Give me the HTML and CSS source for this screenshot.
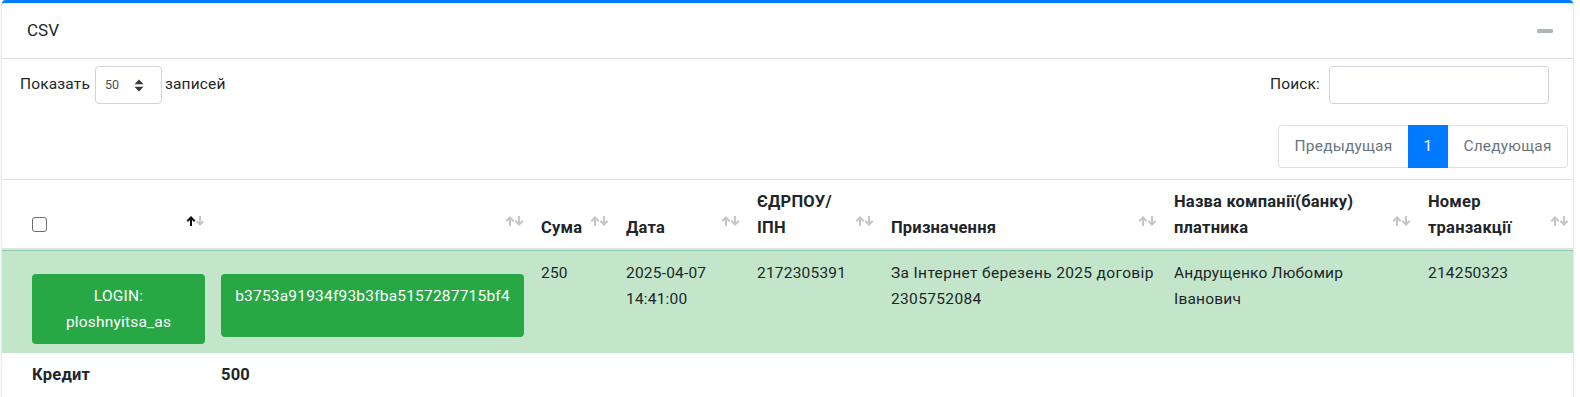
FILE: index.html
```html
<!DOCTYPE html>
<html lang="uk">
<head>
<meta charset="utf-8">
<title>CSV</title>
<link rel="stylesheet" href="styles.css">
</head>
<body>
<div class="page">
  <div class="card">
    <div class="card-header">
      <h3 class="card-title">CSV</h3>
      <button class="tool" type="button" aria-label="collapse"><span class="minus"></span></button>
    </div>
    <div class="card-body">
      <div class="top-row">
        <label class="len">Показать
          <span class="select"><span class="sel-val">50</span>
            <svg class="sel-arrow" width="10" height="13" viewBox="0 0 10 13"><path d="M0.5 5.3 L5 0.6 L9.5 5.3 Z M0.5 7.7 L5 12.4 L9.5 7.7 Z" fill="#343a40"/></svg>
          </span>
          записей</label>
        <label class="search">Поиск: <span class="input"></span></label>
      </div>
      <div class="pag-row">
        <ul class="pagination">
          <li class="page-item disabled"><span class="page-link prev">Предыдущая</span></li>
          <li class="page-item active"><span class="page-link num">1</span></li>
          <li class="page-item disabled"><span class="page-link next">Следующая</span></li>
        </ul>
      </div>
      <table class="tbl">
        <colgroup>
          <col class="c1"><col class="c2"><col class="c3"><col class="c4"><col class="c5"><col class="c6"><col class="c7"><col class="c8">
        </colgroup>
        <thead>
          <tr>
            <th class="first"><div class="th"><input type="checkbox" class="chk"><svg class="sort" width="19" height="10" viewBox="0 0 19 10"><path d="M5 10V1.5 M1.3 5.2 L5 1.4 L8.7 5.2" stroke="#111" stroke-width="2" fill="none"/><path d="M14 0V8.5 M10.8 5.2 L14 8.5 L17.2 5.2" stroke="#c6c6c6" stroke-width="2" fill="none"/></svg></div></th>
            <th class="second"><div class="th"><span></span><svg class="sort" width="19" height="10" viewBox="0 0 19 10"><path d="M5 10V1.5 M1.3 5.2 L5 1.4 L8.7 5.2" stroke="#c6c6c6" stroke-width="2" fill="none"/><path d="M14 0V8.5 M10.3 4.8 L14 8.6 L17.7 4.8" stroke="#c6c6c6" stroke-width="2" fill="none"/></svg></div></th>
            <th><div class="th"><span>Сума</span><svg class="sort" width="19" height="10" viewBox="0 0 19 10"><path d="M5 10V1.5 M1.3 5.2 L5 1.4 L8.7 5.2" stroke="#c6c6c6" stroke-width="2" fill="none"/><path d="M14 0V8.5 M10.3 4.8 L14 8.6 L17.7 4.8" stroke="#c6c6c6" stroke-width="2" fill="none"/></svg></div></th>
            <th><div class="th"><span>Дата</span><svg class="sort" width="19" height="10" viewBox="0 0 19 10"><path d="M5 10V1.5 M1.3 5.2 L5 1.4 L8.7 5.2" stroke="#c6c6c6" stroke-width="2" fill="none"/><path d="M14 0V8.5 M10.3 4.8 L14 8.6 L17.7 4.8" stroke="#c6c6c6" stroke-width="2" fill="none"/></svg></div></th>
            <th><div class="th"><span>ЄДРПОУ/<br>ІПН</span><svg class="sort" width="19" height="10" viewBox="0 0 19 10"><path d="M5 10V1.5 M1.3 5.2 L5 1.4 L8.7 5.2" stroke="#c6c6c6" stroke-width="2" fill="none"/><path d="M14 0V8.5 M10.3 4.8 L14 8.6 L17.7 4.8" stroke="#c6c6c6" stroke-width="2" fill="none"/></svg></div></th>
            <th><div class="th"><span>Призначення</span><svg class="sort" width="19" height="10" viewBox="0 0 19 10"><path d="M5 10V1.5 M1.3 5.2 L5 1.4 L8.7 5.2" stroke="#c6c6c6" stroke-width="2" fill="none"/><path d="M14 0V8.5 M10.3 4.8 L14 8.6 L17.7 4.8" stroke="#c6c6c6" stroke-width="2" fill="none"/></svg></div></th>
            <th><div class="th"><span>Назва компанії(банку)<br>платника</span><svg class="sort" width="19" height="10" viewBox="0 0 19 10"><path d="M5 10V1.5 M1.3 5.2 L5 1.4 L8.7 5.2" stroke="#c6c6c6" stroke-width="2" fill="none"/><path d="M14 0V8.5 M10.3 4.8 L14 8.6 L17.7 4.8" stroke="#c6c6c6" stroke-width="2" fill="none"/></svg></div></th>
            <th><div class="th"><span>Номер<br>транзакції</span><svg class="sort" width="19" height="10" viewBox="0 0 19 10"><path d="M5 10V1.5 M1.3 5.2 L5 1.4 L8.7 5.2" stroke="#c6c6c6" stroke-width="2" fill="none"/><path d="M14 0V8.5 M10.3 4.8 L14 8.6 L17.7 4.8" stroke="#c6c6c6" stroke-width="2" fill="none"/></svg></div></th>
          </tr>
        </thead>
        <tbody>
          <tr class="row-success">
            <td class="btn-cell first"><span class="btn">LOGIN:<br>ploshnyitsa_as</span></td>
            <td class="btn-cell second"><span class="btn hash">b3753a91934f93b3fba5157287715bf4</span></td>
            <td>250</td>
            <td>2025-04-07<br>14:41:00</td>
            <td>2172305391</td>
            <td class="wide">За Інтернет березень 2025 договір<br>2305752084</td>
            <td>Андрущенко Любомир<br>Іванович</td>
            <td>214250323</td>
          </tr>
          <tr class="row-foot">
            <td class="first">Кредит</td>
            <td class="second">500</td>
            <td></td><td></td><td></td><td></td><td></td><td></td>
          </tr>
        </tbody>
      </table>
    </div>
  </div>
</div>
</body>
</html>
```

FILE: styles.css
```css
* { box-sizing: border-box; }
html, body { margin: 0; padding: 0; background: #fff; }
body {
  font-family: Roboto, "Noto Sans", "DejaVu Sans", sans-serif;
  font-size: 15.5px;
  line-height: 25.5px;
  color: #212529;
}
.page { padding: 0 7px 0 2px; }
.card {
  background: #fff;
  border-top: 3px solid #007bff;
  border-radius: 4px 4px 0 0;
  box-shadow: 0 0 1px rgba(0,0,0,.125), 0 1px 3px rgba(0,0,0,.2);
}
.card-header {
  height: 56px;
  display: flex;
  align-items: center;
  justify-content: space-between;
  padding: 0 20px 0 25px;
  border-bottom: 1px solid rgba(0,0,0,.125);
}
.card-title {
  margin: 0;
  font-size: 17px;
  font-weight: 400;
  line-height: 1.2;
  color: #212529;
}
.tool {
  border: 0;
  background: transparent;
  padding: 0;
  width: 16px;
  height: 16px;
  display: flex;
  align-items: center;
}
.minus {
  display: block;
  width: 16px;
  height: 4px;
  border-radius: 1px;
  background: #adb5bd;
}
.top-row {
  display: flex;
  justify-content: space-between;
  align-items: center;
  padding: 7px 24px 0 18px;
  height: 45px;
  letter-spacing: 0.15px;
}
.len, .search {
  display: flex;
  align-items: center;
  gap: 4px;
}
.select {
  width: 67px;
  height: 38px;
  border: 1px solid #ced4da;
  border-radius: 4px;
  display: flex;
  align-items: center;
  justify-content: space-between;
  padding: 0 17px 0 9px;
  margin-right: -1px;
  margin-left: 1px;
}
.sel-val { font-size: 12.5px; color: #495057; letter-spacing: 0; }
.search { gap: 9px; }
.input {
  width: 220px;
  height: 38px;
  border: 1px solid #ced4da;
  border-radius: 4px;
}
.pag-row {
  display: flex;
  justify-content: flex-end;
  padding: 21px 5px 0 0;
  height: 75px;
}
.pagination {
  list-style: none;
  margin: 0;
  padding: 0;
  display: flex;
  height: 43px;
  letter-spacing: 0.2px;
}
.page-link {
  display: flex;
  align-items: center;
  justify-content: center;
  height: 43px;
  border: 1px solid #dee2e6;
  color: #6c757d;
  background: #fff;
}
.prev { width: 130px; border-radius: 4px 0 0 4px; border-right: 0; }
.num { width: 40px; background: #007bff; border-color: #007bff; color: #fff; }
.next { width: 120px; border-radius: 0 4px 4px 0; border-left: 0; }
.tbl {
  width: 100%;
  table-layout: fixed;
  border-collapse: separate;
  border-spacing: 0;
}
.c1 { width: 207px; }
.c2 { width: 319px; }
.c3 { width: 85px; }
.c4 { width: 131px; }
.c5 { width: 134px; }
.c6 { width: 283px; }
.c7 { width: 254px; }
.c8 { width: 158px; }
.tbl th {
  text-align: left;
  vertical-align: bottom;
  font-weight: 700;
  font-size: 16.5px;
  letter-spacing: 0.2px;
  border-top: 1px solid #dee2e6;
  border-bottom: 2px solid #dee2e6;
  padding: 9px 4px 8px 13px;
}
.th {
  display: flex;
  justify-content: space-between;
  align-items: flex-end;
}
.sort { margin-bottom: 14px; flex: none; }
.tbl th.first { padding-left: 30px; }
.tbl th.second { padding-left: 12px; }
.chk {
  appearance: none;
  -webkit-appearance: none;
  width: 15px;
  height: 15px;
  margin: 0 0 8px 0;
  border: 1.5px solid #6e6e6e;
  border-radius: 3px;
  background: #fff;
}
.tbl td {
  vertical-align: top;
  padding: 10px 4px 0 13px;
  letter-spacing: 0.2px;
}
.row-success td {
  background: #c3e6cb;
  border-top: 1px solid #8fd19e;
}
.tbl td.wide { padding-right: 0; letter-spacing: 0.35px; }
.tbl td.btn-cell { padding: 23px 4px 9px 12px; }
.tbl td.btn-cell.first { padding-left: 30px; }
.btn {
  display: block;
  background: #28a745;
  color: #fff;
  border-radius: 4px;
  text-align: center;
  padding: 10px 4px;
  height: 70px;
}
.btn.hash { height: 63px; }
.row-foot td { font-weight: 700; font-size: 16.5px; padding-top: 9px; padding-bottom: 12px; }
.tbl td.first { padding-left: 30px; }
.tbl td.second { padding-left: 12px; }
```
